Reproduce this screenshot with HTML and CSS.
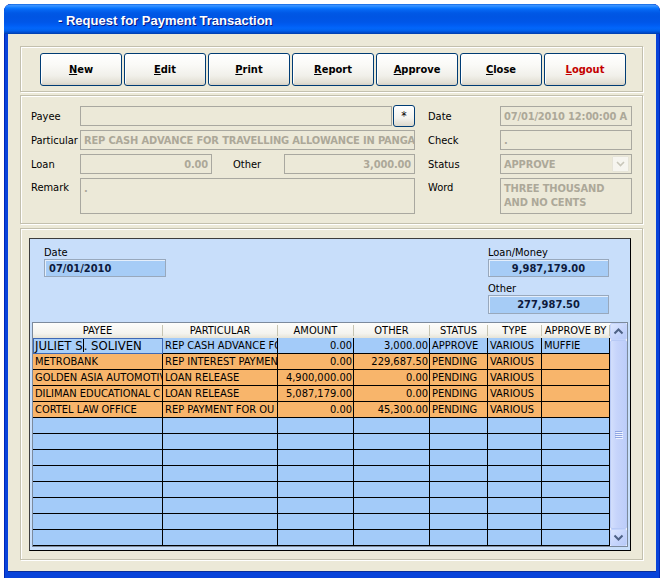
FILE: index.html
```html
<!DOCTYPE html>
<html>
<head>
<meta charset="utf-8">
<title>Request for Payment Transaction</title>
<link rel="stylesheet" href="styles.css">
</head>
<body>
<div class="window">
  <div class="titlebar"><span class="title">- Request for Payment Transaction</span></div>
  <div class="client">
    <div class="group toolbar">
      <button class="btn"><u>N</u>ew</button>
      <button class="btn"><u>E</u>dit</button>
      <button class="btn"><u>P</u>rint</button>
      <button class="btn"><u>R</u>eport</button>
      <button class="btn"><u>A</u>pprove</button>
      <button class="btn"><u>C</u>lose</button>
      <button class="btn logout"><u>L</u>ogout</button>
    </div>

    <div class="group form">
      <div class="lbl">Payee</div>
      <div class="payee">
        <div class="fld"></div>
        <button class="star">*</button>
      </div>
      <div class="lbl r">Date</div>
      <div class="fld">07/01/2010 12:00:00 A</div>

      <div class="lbl">Particular</div>
      <div class="fld span">REP CASH ADVANCE FOR TRAVELLING ALLOWANCE IN PANGA</div>
      <div class="lbl r">Check</div>
      <div class="fld">.</div>

      <div class="lbl">Loan</div>
      <div class="fld num">0.00</div>
      <div class="lbl other">Other</div>
      <div class="fld num">3,000.00</div>
      <div class="lbl r">Status</div>
      <div class="fld select">
        <span>APPROVE</span>
        <span class="dd"><svg width="15" height="14" viewBox="0 0 15 14"><polyline points="4,5 7.5,8.5 11,5" fill="none" stroke="#C9C7BA" stroke-width="1.6"/></svg></span>
      </div>

      <div class="lbl top">Remark</div>
      <div class="fld span multi">.</div>
      <div class="lbl r top">Word</div>
      <div class="fld multi">THREE THOUSAND AND NO CENTS</div>
    </div>

    <div class="group listgroup">
      <div class="panel">
        <div class="summary">
          <div class="sfield">
            <div class="cap">Date</div>
            <div class="sbox datebox">07/01/2010</div>
          </div>
          <div class="sfield">
            <div class="cap">Loan/Money</div>
            <div class="sbox tot">9,987,179.00</div>
            <div class="cap cap2">Other</div>
            <div class="sbox tot tall">277,987.50</div>
          </div>
        </div>

        <div class="grid">
          <div class="gridbody">
            <div class="hdr">
              <span>PAYEE</span><span>PARTICULAR</span><span>AMOUNT</span><span>OTHER</span><span>STATUS</span><span>TYPE</span><span>APPROVE BY</span>
            </div>
            <div class="row b">
              <span class="edit">JULIET S<i class="caret"></i>. SOLIVEN</span><span>REP CASH ADVANCE FO</span><span class="n">0.00</span><span class="n">3,000.00</span><span>APPROVE</span><span>VARIOUS</span><span>MUFFIE</span>
            </div>
            <div class="row o">
              <span>METROBANK</span><span>REP INTEREST PAYMEN</span><span class="n">0.00</span><span class="n">229,687.50</span><span>PENDING</span><span>VARIOUS</span><span></span>
            </div>
            <div class="row o">
              <span>GOLDEN ASIA AUTOMOTIV</span><span>LOAN RELEASE</span><span class="n">4,900,000.00</span><span class="n">0.00</span><span>PENDING</span><span>VARIOUS</span><span></span>
            </div>
            <div class="row o">
              <span>DILIMAN EDUCATIONAL C</span><span>LOAN RELEASE</span><span class="n">5,087,179.00</span><span class="n">0.00</span><span>PENDING</span><span>VARIOUS</span><span></span>
            </div>
            <div class="row o">
              <span>CORTEL LAW OFFICE</span><span>REP PAYMENT FOR OU</span><span class="n">0.00</span><span class="n">45,300.00</span><span>PENDING</span><span>VARIOUS</span><span></span>
            </div>
            <div class="row b"><span></span><span></span><span></span><span></span><span></span><span></span><span></span></div>
            <div class="row b"><span></span><span></span><span></span><span></span><span></span><span></span><span></span></div>
            <div class="row b"><span></span><span></span><span></span><span></span><span></span><span></span><span></span></div>
            <div class="row b"><span></span><span></span><span></span><span></span><span></span><span></span><span></span></div>
            <div class="row b"><span></span><span></span><span></span><span></span><span></span><span></span><span></span></div>
            <div class="row b"><span></span><span></span><span></span><span></span><span></span><span></span><span></span></div>
            <div class="row b"><span></span><span></span><span></span><span></span><span></span><span></span><span></span></div>
            <div class="row b"><span></span><span></span><span></span><span></span><span></span><span></span><span></span></div>
          </div>
          <div class="vscroll">
            <div class="sb-btn"><svg width="15" height="15" viewBox="0 0 15 15"><polyline points="3.5,9.5 7.5,5.5 11.5,9.5" fill="none" stroke="#4D6185" stroke-width="2"/></svg></div>
            <div class="sb-thumb"><svg width="8" height="8" viewBox="0 0 8 8"><g fill="#8FA5E2"><rect x="0" y="0" width="7" height="1"/><rect x="0" y="2" width="7" height="1"/><rect x="0" y="4" width="7" height="1"/><rect x="0" y="6" width="7" height="1"/></g><g fill="#EEF3FE"><rect x="1" y="1" width="7" height="1"/><rect x="1" y="3" width="7" height="1"/><rect x="1" y="5" width="7" height="1"/><rect x="1" y="7" width="7" height="1"/></g></svg></div>
            <div class="sb-btn"><svg width="15" height="15" viewBox="0 0 15 15"><polyline points="3.5,5.5 7.5,9.5 11.5,5.5" fill="none" stroke="#4D6185" stroke-width="2"/></svg></div>
          </div>
        </div>
      </div>
    </div>
  </div>
</div>
</body>
</html>
```

FILE: styles.css
```css
* { box-sizing: border-box; }

html, body {
  margin: 0;
  padding: 0;
  background: #ffffff;
}

body {
  font-family: "DejaVu Sans Condensed", "Liberation Sans", sans-serif;
  font-size: 11px;
  color: #000;
}

.window {
  margin: 4px 0 0 4px;
  width: 656px;
  height: 574px;
  display: flex;
  flex-direction: column;
  background: #0843D9;
  border-radius: 7px 7px 0 0;
  box-shadow: inset 1px 0 0 #0027B8, inset -1px 0 0 #0027B8;
  overflow: hidden;
}

.titlebar {
  flex: none;
  height: 30px;
  padding: 3px 0 0 54px;
  display: flex;
  align-items: center;
  border-radius: 7px 7px 0 0;
  background: linear-gradient(to bottom,
    #0A5FDB 0%, #3D95FF 4%, #2D8BFF 8%, #137EFF 12%, #0570FD 16%,
    #0463EF 22%, #0058E6 30%, #0055E3 42%, #0056E8 60%, #005CF2 70%,
    #0266FB 80%, #0162EF 88%, #0050D5 94%, #003CA8 100%);
}

.title {
  font-family: "Liberation Sans", sans-serif;
  font-weight: bold;
  font-size: 13px;
  color: #fff;
  text-shadow: 1px 1px 0 #0A1883;
}

.client {
  flex: none;
  height: 537px;
  margin: 0 4px;
  background: #ECE9D8;
  padding: 12px 13px 11px 12px;
  display: flex;
  flex-direction: column;
  box-shadow: 0 1px 0 #0A2D99;
}

.group {
  flex: none;
  border: 1px solid #C3C0AE;
  box-shadow: inset 1px 1px 0 #fff, 1px 1px 0 #fff;
}

/* toolbar */
.toolbar {
  height: 46px;
  padding: 6px 0 0 19px;
  display: flex;
  gap: 2px;
}

.btn {
  width: 82px;
  height: 33px;
  padding: 0;
  border: 1px solid #003C74;
  border-radius: 3px;
  background: linear-gradient(to bottom, #FFFFFF 0%, #FAFAF7 35%, #F1F0EA 70%, #E3E0D5 92%, #D6D0C5 100%);
  box-shadow: inset 1px 1px 0 #fff;
  font: inherit;
  font-weight: bold;
  color: #000;
}

.btn u { text-decoration: underline; }
.btn.logout { color: #C40000; }

/* form */
.form {
  margin-top: 3px;
  height: 129px;
  padding: 10px 10px 0 10px;
  display: grid;
  grid-template-columns: 49px 132px 72px 131px 85px 132px;
  grid-template-rows: 20px 20px 20px 36px;
  row-gap: 4px;
  align-content: start;
}

.lbl {
  display: flex;
  align-items: center;
  white-space: nowrap;
}
.lbl.top { align-items: flex-start; padding-top: 3px; }
.lbl.other { padding-left: 21px; }
.lbl.r { padding-left: 13px; }

.fld {
  border: 1px solid #A9A8A0;
  background: #ECE9D8;
  color: #ACA899;
  font-weight: bold;
  letter-spacing: -0.15px;
  padding: 0 3px;
  display: flex;
  align-items: center;
  white-space: nowrap;
  overflow: hidden;
}
.fld.span { grid-column: 2 / 5; }
.fld.num { justify-content: flex-end; }
.fld.multi {
  align-items: flex-start;
  padding-top: 3px;
  white-space: normal;
  line-height: 14px;
}

.payee {
  grid-column: 2 / 5;
  display: flex;
  gap: 1px;
}
.payee .fld { flex: 1; }

.star {
  flex: none;
  width: 22px;
  height: 22px;
  margin-top: -1px;
  padding: 0;
  border: 1px solid #003C74;
  border-radius: 3px;
  background: linear-gradient(to bottom, #FFFFFF, #F4F3EE 60%, #DCD8CC);
  font: inherit;
  font-size: 12px;
  color: #000;
}

.fld.select { justify-content: space-between; padding-right: 2px; }
.dd {
  width: 17px;
  height: 16px;
  border: 1px solid #E6E4D8;
  border-radius: 1px;
  background: #F6F5EF;
  display: flex;
  align-items: center;
  justify-content: center;
}

/* list area */
.listgroup {
  margin-top: 4px;
  height: 332px;
  padding: 9px 11px 8px 8px;
}

.panel {
  height: 313px;
  border: 1px solid #000;
  border-color: #3C3C3C #000 #000 #3C3C3C;
  background: #C8DEFA;
  padding: 7px 2px 3px 2px;
  display: flex;
  flex-direction: column;
}

.summary {
  flex: none;
  height: 68px;
  display: flex;
  justify-content: space-between;
  padding: 0 19px 0 12px;
}

.cap {
  height: 13px;
  line-height: 13px;
  white-space: nowrap;
}
.cap2 { margin-top: 5px; }

.sbox {
  height: 18px;
  width: 121px;
  background: #A6CCF6;
  border: 1px solid #98A8BC;
  box-shadow: inset 1px 1px 0 #E4EEFB;
  font-weight: bold;
  color: #0E1A3C;
  display: flex;
  align-items: center;
  white-space: nowrap;
}
.datebox { width: 122px; padding-left: 4px; }
.tot { justify-content: center; }
.tot.tall { height: 19px; }

.grid {
  flex: none;
  margin-top: 8px;
  height: 225px;
  border: 1px solid #7C8A9C;
  display: flex;
}

.gridbody {
  flex: none;
  width: 577px;
}

.hdr, .row {
  display: grid;
  grid-template-columns: 130px 115px 76px 76px 58px 54px 68px;
}

.hdr {
  height: 15px;
  background: linear-gradient(to bottom, #FDFDFB 0%, #F4F3EE 70%, #E6E3D6 100%);
}
.hdr span {
  text-align: center;
  line-height: 15px;
  white-space: nowrap;
  overflow: hidden;
  border-right: 1px solid #C7C5B2;
  border-image: linear-gradient(to bottom, transparent 3px, #C7C5B2 3px, #C7C5B2 12px, transparent 12px) 1;
}

.row { height: 16px; }
.row.b { background: #A3CBF9; }
.row.o { background: #F8B56B; }

.row span {
  border-right: 1px solid #000;
  border-bottom: 1px solid #000;
  line-height: 15px;
  padding: 0 2px;
  white-space: nowrap;
  overflow: hidden;
}
.row span.n { text-align: right; padding-right: 1px; }

.row span.edit {
  border: 1px solid #3E68B4;
  background: #A9CFF9;
  font-size: 13px;
  line-height: 14px;
  padding: 0 1px;
}
.caret {
  display: inline-block;
  width: 1px;
  height: 13px;
  background: #000;
  vertical-align: -2px;
}

/* scrollbar */
.vscroll {
  flex: none;
  width: 17px;
  display: flex;
  flex-direction: column;
  background: #F3F4FC;
}
.sb-btn {
  flex: none;
  height: 17px;
  border: 1px solid #C4D4FC;
  border-radius: 2px;
  background: linear-gradient(135deg, #DDE7FE 0%, #C6D5FC 55%, #B8CAF8 100%);
  display: flex;
  align-items: center;
  justify-content: center;
}
.sb-thumb {
  flex: 1;
  border: 1px solid #B8CAF6;
  border-radius: 2px;
  background: linear-gradient(to right, #D2DEFC 0%, #C6D4FB 40%, #BDCDF9 100%);
  display: flex;
  align-items: center;
  justify-content: center;
}
```
